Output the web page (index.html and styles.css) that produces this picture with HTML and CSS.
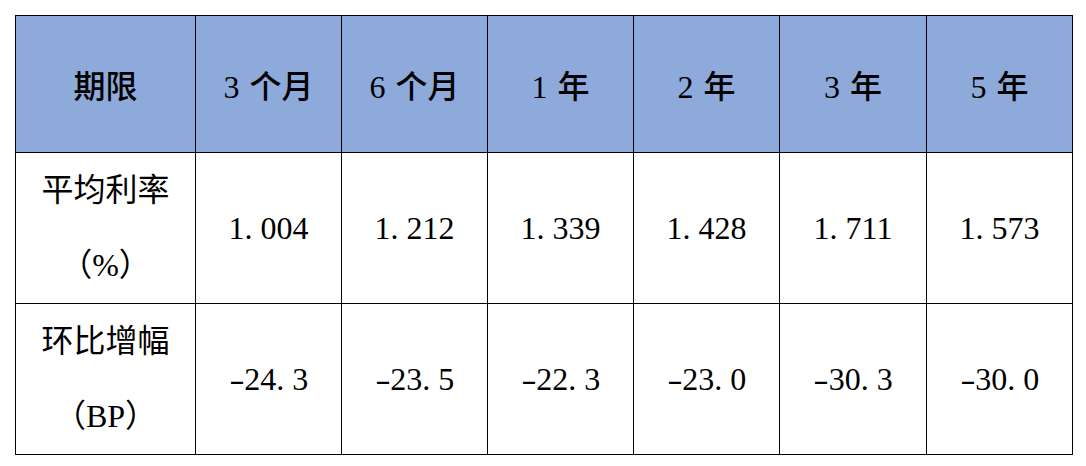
FILE: index.html
```html
<!DOCTYPE html>
<html lang="zh-CN">
<head>
<meta charset="utf-8">
<title>利率表</title>
<link rel="stylesheet" href="styles.css">
</head>
<body>
<div class="page">
<table class="rates">
  <colgroup>
    <col class="c-first"><col class="c"><col class="c"><col class="c"><col class="c"><col class="c5"><col class="c">
  </colgroup>
  <thead>
    <tr class="head">
      <th>期限</th>
      <th><span class="num">3</span>个月</th>
      <th><span class="num">6</span>个月</th>
      <th><span class="num">1</span>年</th>
      <th><span class="num">2</span>年</th>
      <th><span class="num">3</span>年</th>
      <th><span class="num">5</span>年</th>
    </tr>
  </thead>
  <tbody>
    <tr class="row">
      <td class="label"><div>平均利率</div><div>（%）</div></td>
      <td class="val">1<span class="dot">.</span>004</td>
      <td class="val">1<span class="dot">.</span>212</td>
      <td class="val">1<span class="dot">.</span>339</td>
      <td class="val">1<span class="dot">.</span>428</td>
      <td class="val">1<span class="dot">.</span>711</td>
      <td class="val">1<span class="dot">.</span>573</td>
    </tr>
    <tr class="row">
      <td class="label"><div>环比增幅</div><div>（BP）</div></td>
      <td class="val"><span class="minus">-</span>24<span class="dot">.</span>3</td>
      <td class="val"><span class="minus">-</span>23<span class="dot">.</span>5</td>
      <td class="val"><span class="minus">-</span>22<span class="dot">.</span>3</td>
      <td class="val"><span class="minus">-</span>23<span class="dot">.</span>0</td>
      <td class="val"><span class="minus">-</span>30<span class="dot">.</span>3</td>
      <td class="val"><span class="minus">-</span>30<span class="dot">.</span>0</td>
    </tr>
  </tbody>
</table>
</div>
</body>
</html>
```

FILE: styles.css
```css
html, body {
  margin: 0;
  padding: 0;
  background: #ffffff;
}

.page {
  padding: 15px 0 0 15px;
}

.rates {
  border-collapse: collapse;
  table-layout: fixed;
  width: 1058px;
  font-family: "Liberation Serif", "Noto Sans CJK SC", serif;
  font-size: 32px;
  color: #000000;
}

.c-first { width: 180px; }
.c { width: 146px; }
.c5 { width: 147px; }

.rates th,
.rates td {
  border: 1px solid #000000;
  padding: 0;
  text-align: center;
  vertical-align: middle;
}

.head th {
  height: 136px;
  background: #8eaadb;
  font-weight: 500;
}

.row td {
  height: 150px;
  font-weight: 400;
}

.num {
  margin-right: 10px;
}

.label div {
  line-height: 75px;
}

.dot {
  letter-spacing: 8px;
}

.minus {
  display: inline-block;
  transform: scaleX(1.45);
  transform-origin: right center;
  margin-left: 5px;
}
```
